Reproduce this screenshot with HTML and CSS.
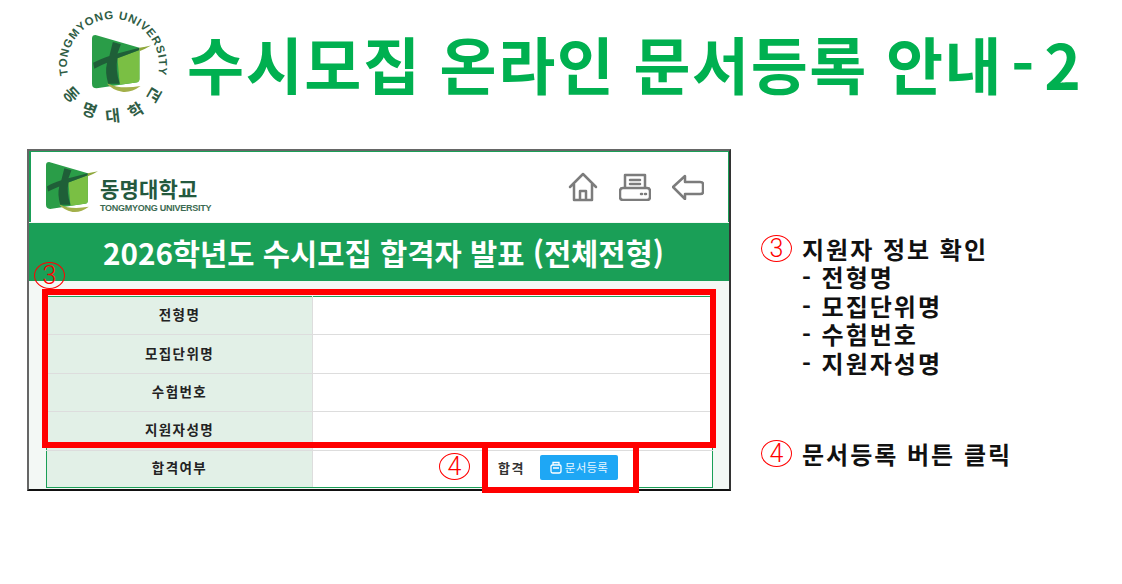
FILE: index.html
```html
<!DOCTYPE html>
<html lang="ko">
<head>
    <meta charset="UTF-8">
    <title>수시모집 온라인 문서등록 안내-2</title>
    <link rel="stylesheet" href="styles.css">
</head>
<body>

    <!-- shared logo mark -->
    <svg class="defs" width="0" height="0">
        <symbol id="mark" viewBox="0 0 51 50">
            <path fill="#2a9d48" d="M3 0 L41 11 V38 Q41 41 38 41 L4 46 Q0 46 0 42 V3 Q0 0 3 0Z"/>
            <path fill="#7abf44" d="M22 20 L41 13 V38 Q41 41 38 41 L24 43Z"/>
            <path fill="#a3b04a" d="M14 42 Q24 47 42 44 Q34 50 26 49 Q17 47 13 42Z"/>
            <path fill="#1f5f38" d="M1 24 Q6 21 15 18 L18 6 L25 8 L22 16 L41 11 L41 13 L22 20 Q20 30 24 42 L14 42 Q11 32 13 24 Q8 26 2 29Z"/>
            <path fill="#8fa83c" d="M41 11 Q46 10 51 9 Q46 12 41 14Z"/>
        </symbol>
    </svg>

    <!-- Title -->
    <div class="top">
        <svg class="seal" viewBox="0 0 120 120">
            <defs>
                <path id="ringTop" d="M26.500 90.500 A46 46 0 1 1 91.500 90.500"/>
                <path id="ringBottom" d="M3 68 A57 57 0 0 0 115 68"/>
            </defs>
            <text class="seal-en"><textPath href="#ringTop" startOffset="50%" text-anchor="middle">TONGMYONG UNIVERSITY</textPath></text>
            <text class="seal-ko"><textPath href="#ringBottom" startOffset="54%" text-anchor="middle">동명대학교</textPath></text>
            <use href="#mark" x="38" y="28" width="59" height="58"/>
        </svg>
        <h1>수시모집 온라인 문서등록 안내<span class="suffix">-2</span></h1>
    </div>

    <div class="main">

        <!-- Captured result page -->
        <div class="frame">
            <div class="site-head">
                <div class="brand">
                    <svg class="brand-mark"><use href="#mark"/></svg>
                    <div class="brand-text">
                        <span class="brand-ko">동명대학교</span>
                        <span class="brand-en">TONGMYONG UNIVERSITY</span>
                    </div>
                </div>
                <div class="tools">
                    <svg class="tool" width="30" height="30" viewBox="0 0 30 30">
                        <path d="M2 15 L15 2 L28 15 M6 12 V28 H24 V12 M12 28 V19 H18 V28"/>
                    </svg>
                    <svg class="tool" width="32" height="28" viewBox="0 0 32 28">
                        <path d="M6 15 V2 H26 V15 M11 7 H21 M11 11 H21 M4 15 H28 Q31 15 31 18 V24 Q31 27 28 27 H4 Q1 27 1 24 V18 Q1 15 4 15Z M22 21 H23 M26 21 H27"/>
                    </svg>
                    <svg class="tool" width="32" height="26" viewBox="0 0 32 26">
                        <path d="M1 13 L13 2 V8 H28 Q31 8 31 10 V18 Q31 20 28 20 H13 V25Z"/>
                    </svg>
                </div>
            </div>
            <div class="banner">2026학년도 수시모집 합격자 발표 (전체전형)</div>
            <div class="panel">
                <table class="result">
                    <tr><th>전형명</th><td></td></tr>
                    <tr><th>모집단위명</th><td></td></tr>
                    <tr><th>수험번호</th><td></td></tr>
                    <tr><th>지원자성명</th><td></td></tr>
                    <tr>
                        <th>합격여부</th>
                        <td>
                            <div class="pass">
                                <span>합격</span>
                                <span class="doc-btn">
                                    <svg width="12" height="13" viewBox="0 0 12 13"><path d="M3 4 V1.5 H9 V4 M2.5 4 H9.5 Q11 4 11 5.5 V10 Q11 12 9 12 H3 Q1 12 1 10 V5.5 Q1 4 2.5 4Z M3 7 H9"/></svg>
                                    문서등록
                                </span>
                            </div>
                        </td>
                    </tr>
                </table>
            </div>

            <!-- Annotations over the capture -->
            <span class="num num-3">3</span>
            <span class="num num-4">4</span>
            <div class="mark-box box-info"></div>
            <div class="mark-box box-btn"></div>
        </div>

        <!-- Notes -->
        <div class="notes">
            <div class="note">
                <span class="num">3</span>
                <div class="note-body">
                    <p>지원자 정보 확인</p>
                    <ul>
                        <li>- 전형명</li>
                        <li>- 모집단위명</li>
                        <li>- 수험번호</li>
                        <li>- 지원자성명</li>
                    </ul>
                </div>
            </div>
            <div class="note">
                <span class="num">4</span>
                <div class="note-body">
                    <p>문서등록 버튼 클릭</p>
                </div>
            </div>
        </div>

    </div>

</body>
</html>
```

FILE: styles.css
```css
/* General */
body {
    margin: 0;
    width: 1122px;
    height: 584px;
    overflow: hidden;
    background: white;
    font-family: "Noto Sans CJK KR", "Noto Sans", sans-serif;
}

.defs {
    position: absolute;
}

/* Title */
.top {
    display: flex;
    align-items: flex-start;
    height: 149px;
    padding-left: 54px;
}

.seal {
    width: 120px;
    height: 120px;
    margin-top: 7px;
    flex: none;
}

.seal-en {
    font-family: "Liberation Sans", sans-serif;
    font-size: 11.5px;
    font-weight: 700;
    letter-spacing: 0.8px;
    fill: #2f5d45;
}

.seal-ko {
    font-size: 16px;
    font-weight: 700;
    letter-spacing: 12px;
    fill: #2f5d45;
}

.top h1 {
    margin: 18px 0 0 13px;
    font-size: 62px;
    line-height: 90px;
    font-weight: 700;
    letter-spacing: 1.6px;
    word-spacing: -1px;
    color: #00b050;
    white-space: nowrap;
}

.top .suffix {
    margin-left: 8px;
    letter-spacing: 10px;
}

/* Layout */
.main {
    display: flex;
    padding-left: 27px;
}

/* Captured page */
.frame {
    position: relative;
    box-sizing: border-box;
    width: 704px;
    height: 342px;
    border: 2px solid #666;
    border-right-color: #333;
    border-bottom-color: #111;
    background: #f3f8f5;
}

.site-head {
    display: flex;
    justify-content: space-between;
    align-items: center;
    height: 70px;
    padding: 0 24px 0 15px;
    background: white;
    border-top: 1px solid #1a9f57;
    border-left: 2px solid #1a9f57;
    border-right: 1px solid #1a9f57;
}

.brand {
    display: flex;
    align-items: flex-start;
    gap: 2px;
}

.brand-mark {
    width: 52px;
    height: 51px;
}

.brand-text {
    display: flex;
    flex-direction: column;
    padding-top: 11px;
}

.brand-ko {
    font-size: 21px;
    line-height: 30px;
    font-weight: 700;
    letter-spacing: 0.2px;
    color: #24593e;
}

.brand-en {
    font-family: "Liberation Sans", sans-serif;
    font-size: 9px;
    line-height: 10px;
    font-weight: 700;
    letter-spacing: -0.25px;
    color: #3c6a52;
}

.tools {
    display: flex;
    align-items: center;
    gap: 21px;
}

.tool {
    fill: none;
    stroke: #7c7c7c;
    stroke-width: 2.5;
    stroke-linejoin: round;
    stroke-linecap: round;
}

.banner {
    height: 58px;
    margin-top: 1px;
    padding-left: 9px;
    text-align: center;
    font-size: 29.6px;
    line-height: 60px;
    font-weight: 700;
    color: white;
    background: #1a9f57;
    white-space: nowrap;
}

.panel {
    padding: 15px 16px 0 17px;
}

/* Result table */
.result {
    width: 100%;
    border-collapse: collapse;
    table-layout: fixed;
    border: 1px solid #1a9f57;
    background: white;
}

.result tr {
    height: 38.4px;
}

.result tr:last-child {
    height: 37px;
}

.result th {
    width: 265px;
    padding: 0 0 3px;
    font-size: 13.5px;
    font-weight: 700;
    letter-spacing: 1.4px;
    color: #222;
    background: #e2f0e7;
    border-right: 1px solid #ddd;
    border-bottom: 1px solid #ddd;
}

.result td {
    padding: 0 0 3px;
    border-bottom: 1px solid #ddd;
}

.result tr:last-child th,
.result tr:last-child td {
    border-bottom: 1px solid #1a9f57;
}

.pass {
    display: flex;
    align-items: center;
    gap: 15px;
    padding-left: 185px;
    font-size: 13px;
    font-weight: 700;
    letter-spacing: 1.5px;
    color: #333;
}

.doc-btn {
    display: flex;
    align-items: center;
    justify-content: center;
    gap: 3px;
    width: 78px;
    height: 25px;
    font-size: 11.5px;
    font-weight: 400;
    letter-spacing: 0.2px;
    color: #e8f6ff;
    background: #1ea7f5;
    border-radius: 2px;
}

.doc-btn svg {
    fill: none;
    stroke: white;
    stroke-width: 1.3;
}

/* Red annotations */
.num {
    display: flex;
    align-items: center;
    justify-content: center;
    box-sizing: border-box;
    flex: none;
    width: 31px;
    height: 27px;
    border: 1px solid #f00;
    border-radius: 50%;
    font-family: Roboto, "Liberation Sans", sans-serif;
    font-size: 25px;
    font-weight: 300;
    letter-spacing: 0;
    color: #f00;
}

.frame .num {
    position: absolute;
}

.num-3 {
    left: 5px;
    top: 111px;
}

.num-4 {
    left: 410px;
    top: 302px;
}

.mark-box {
    position: absolute;
    box-sizing: border-box;
    border: 6px solid #f00;
}

.box-info {
    left: 13px;
    top: 138px;
    width: 674px;
    height: 159px;
}

.box-btn {
    left: 453px;
    top: 296px;
    width: 157px;
    height: 46px;
    border-top: none;
}

/* Notes */
.notes {
    padding: 86px 0 0 30px;
    font-weight: 700;
    font-size: 24px;
    letter-spacing: 2px;
    color: #111;
}

.note {
    display: flex;
    gap: 10px;
    margin-bottom: 62px;
}

.note-body p {
    margin: 0;
    line-height: 28px;
}

.note-body ul {
    margin: 0;
    padding: 0;
    list-style: none;
    line-height: 28.7px;
}
```
